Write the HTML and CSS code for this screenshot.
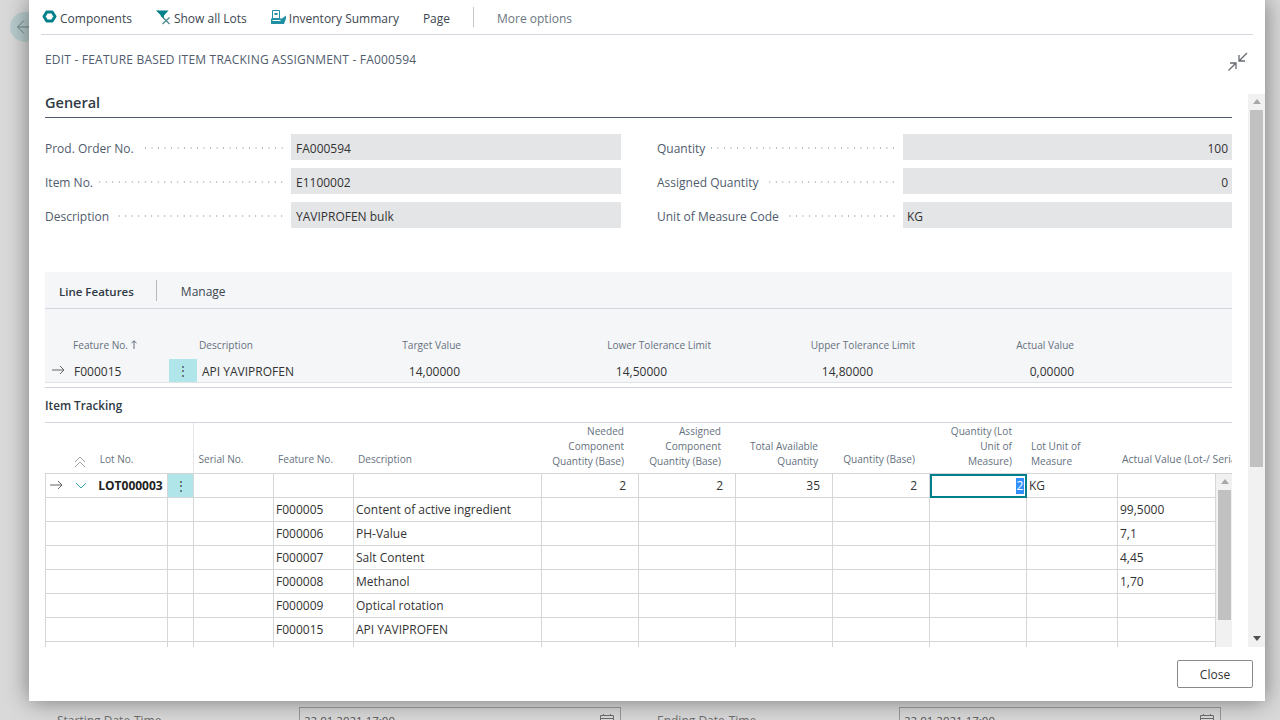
FILE: index.html
```html
<!DOCTYPE html>
<html lang="en">
<head>
    <meta charset="UTF-8">
    <title>Edit - Feature Based Item Tracking Assignment</title>
    <link rel="stylesheet" href="styles.css">
</head>
<body>
    <!-- Page behind the dialog -->
    <div class="page">
        <div class="back-button">
            <svg width="16" height="16" viewBox="0 0 16 16"><path d="M8 1.500 1.500 8 8 14.500M1.500 8H15" fill="none" stroke="#6f8486" stroke-width="1"/></svg>
        </div>
        <div class="date-row">
            <div class="date-field">
                <span class="date-label">Starting Date-Time</span>
                <span class="date-dots"></span>
                <div class="date-input">
                    <span>22.01.2021 17:00</span>
                    <svg width="16" height="14" viewBox="0 0 16 14"><path d="M1.500 2.500h13v11h-13zM1.500 5.500h13M4.500 1v2M11.500 1v2" fill="none" stroke="#6f6f6f"/></svg>
                </div>
            </div>
            <div class="date-field">
                <span class="date-label">Ending Date-Time</span>
                <span class="date-dots"></span>
                <div class="date-input">
                    <span>22.01.2021 17:00</span>
                    <svg width="16" height="14" viewBox="0 0 16 14"><path d="M1.500 2.500h13v11h-13zM1.500 5.500h13M4.500 1v2M11.500 1v2" fill="none" stroke="#6f6f6f"/></svg>
                </div>
            </div>
        </div>
    </div>

    <div class="dialog">
        <div class="action-bar">
            <a class="action">
                <svg width="15" height="16" viewBox="0 0 15 16"><path d="M2 7.500 4.800 3h5.400L13 7.500 10.200 12H4.800z" fill="none" stroke="#00808a" stroke-width="3" stroke-linejoin="round"/></svg>
                Components
            </a>
            <a class="action">
                <svg width="15" height="16" viewBox="0 0 15 16"><path d="M0 1.500h12.500L8 6.500v3.500L5 7.500 4.500 6z" fill="#00808a"/><path d="M6.500 8 13.500 15M13.500 8.500 6.500 15" stroke="#4d8a90" stroke-width="1.300"/></svg>
                Show all Lots
            </a>
            <a class="action">
                <svg width="15" height="16" viewBox="0 0 15 16"><path d="M1.500 1.500h7v8h-7z" fill="#fff" stroke="#1f8fa3"/><path d="M3.500 4h3v2h-3z" fill="#1f8fa3"/><path d="M0 9.500h11l4-3v3l-2 5.500H0z" fill="#1f8fa3"/><path d="M1.500 11.500h8" stroke="#fff"/></svg>
                Inventory Summary
            </a>
            <a class="action">Page</a>
            <span class="action-sep"></span>
            <a class="action muted">More options</a>
        </div>

        <div class="title-row">
            <div class="dialog-title">EDIT - FEATURE BASED ITEM TRACKING ASSIGNMENT - FA000594</div>
            <svg width="20" height="20" viewBox="0 0 20 20"><path d="M19 1 11 9M11 3v6h6M.5 18.500 8 11M2 11h6v6" fill="none" stroke="#666a70" stroke-width="1.300"/></svg>
        </div>

        <div class="dialog-main">
            <div class="content">
                <h2 class="section-title">General</h2>
                <div class="form">
                    <div class="form-col">
                        <div class="form-row"><span class="form-label">Prod. Order No.</span><span class="dots"></span><div class="form-value">FA000594</div></div>
                        <div class="form-row"><span class="form-label">Item No.</span><span class="dots"></span><div class="form-value">E1100002</div></div>
                        <div class="form-row"><span class="form-label">Description</span><span class="dots"></span><div class="form-value">YAVIPROFEN bulk</div></div>
                    </div>
                    <div class="form-col">
                        <div class="form-row"><span class="form-label">Quantity</span><span class="dots"></span><div class="form-value num">100</div></div>
                        <div class="form-row"><span class="form-label">Assigned Quantity</span><span class="dots"></span><div class="form-value num">0</div></div>
                        <div class="form-row"><span class="form-label">Unit of Measure Code</span><span class="dots"></span><div class="form-value">KG</div></div>
                    </div>
                </div>

                <div class="subpage">
                    <div class="subpage-bar">
                        <span class="subpage-name">Line Features</span>
                        <span class="subpage-sep"></span>
                        <span class="subpage-link">Manage</span>
                    </div>
                    <div class="feature-head">
                        <span class="fh-no">Feature No. <svg width="6" height="9" viewBox="0 0 6 9"><path d="M3 9V1M.5 3 3 .8 5.500 3" fill="none" stroke="#5f6b78"/></svg></span>
                        <span class="fh-desc">Description</span>
                        <span class="fh-num w-target">Target Value</span>
                        <span class="fh-num w-lower">Lower Tolerance Limit</span>
                        <span class="fh-num w-upper">Upper Tolerance Limit</span>
                        <span class="fh-num w-actual">Actual Value</span>
                    </div>
                    <div class="feature-row">
                        <svg class="row-arrow" width="14" height="10" viewBox="0 0 14 10"><path d="M1 5h12M9 1l4 4-4 4" fill="none" stroke="#666"/></svg>
                        <span class="fr-no">F000015</span>
                        <span class="kebab">&#8942;</span>
                        <span class="fr-desc">API YAVIPROFEN</span>
                        <span class="fr-num v-target">14,00000</span>
                        <span class="fr-num v-lower">14,50000</span>
                        <span class="fr-num v-upper">14,80000</span>
                        <span class="fr-num v-actual">0,00000</span>
                    </div>
                </div>

                <div class="tracking">
                    <div class="tracking-title">Item Tracking</div>
                    <div class="tracking-head">
                        <table class="grid head">
                            <colgroup><col class="c1"><col class="c2"><col class="c3"><col class="c4"><col class="c5"><col class="c6"><col class="c6"><col class="c6"><col class="c6"><col class="c6"><col class="c7"><col class="c8"></colgroup>
                            <tr>
                                <th colspan="2" class="lot-head single">
                                    <svg width="12" height="12" viewBox="0 0 12 12"><path d="M1 6l5-5 5 5M1 11l5-5 5 5" fill="none" stroke="#9aa0a6"/></svg>
                                    <span>Lot No.</span>
                                </th>
                                <th class="single">Serial No.</th>
                                <th class="single">Feature No.</th>
                                <th class="single">Description</th>
                                <th class="num">Needed Component Quantity (Base)</th>
                                <th class="num">Assigned Component Quantity (Base)</th>
                                <th class="num">Total Available Quantity</th>
                                <th class="num single">Quantity (Base)</th>
                                <th class="num">Quantity (Lot Unit of Measure)</th>
                                <th>Lot Unit of Measure</th>
                                <th class="nowrap single">Actual Value (Lot-/ Serial No.)</th>
                            </tr>
                        </table>
                    </div>
                    <div class="tracking-body">
                        <table class="grid body">
                            <colgroup><col class="c1"><col class="c2"><col class="c3"><col class="c4"><col class="c5"><col class="c6"><col class="c6"><col class="c6"><col class="c6"><col class="c6"><col class="c7"><col class="c9"></colgroup>
                            <tr class="lot-row">
                                <td class="lot-cell">
                                    <svg class="row-arrow" width="14" height="10" viewBox="0 0 14 10"><path d="M1 5h12M9 1l4 4-4 4" fill="none" stroke="#666"/></svg>
                                    <svg class="lot-toggle" width="12" height="7" viewBox="0 0 12 7"><path d="M1 1l5 5 5-5" fill="none" stroke="#3aa5ad"/></svg>
                                    <b>LOT000003</b>
                                </td>
                                <td class="kebab">&#8942;</td>
                                <td></td><td></td><td></td>
                                <td class="num">2</td><td class="num">2</td><td class="num">35</td><td class="num">2</td>
                                <td class="focus"><span class="selected">2</span></td>
                                <td>KG</td><td></td>
                            </tr>
                            <tr><td></td><td></td><td></td><td>F000005</td><td>Content of active ingredient</td><td></td><td></td><td></td><td></td><td></td><td></td><td>99,5000</td></tr>
                            <tr><td></td><td></td><td></td><td>F000006</td><td>PH-Value</td><td></td><td></td><td></td><td></td><td></td><td></td><td>7,1</td></tr>
                            <tr><td></td><td></td><td></td><td>F000007</td><td>Salt Content</td><td></td><td></td><td></td><td></td><td></td><td></td><td>4,45</td></tr>
                            <tr><td></td><td></td><td></td><td>F000008</td><td>Methanol</td><td></td><td></td><td></td><td></td><td></td><td></td><td>1,70</td></tr>
                            <tr><td></td><td></td><td></td><td>F000009</td><td>Optical rotation</td><td></td><td></td><td></td><td></td><td></td><td></td><td></td></tr>
                            <tr><td></td><td></td><td></td><td>F000015</td><td>API YAVIPROFEN</td><td></td><td></td><td></td><td></td><td></td><td></td><td></td></tr>
                            <tr><td></td><td></td><td></td><td></td><td></td><td></td><td></td><td></td><td></td><td></td><td></td><td></td></tr>
                        </table>
                        <div class="scrollbar inner"><span class="arrow-up"></span><span class="thumb"></span></div>
                    </div>
                </div>
            </div>
            <div class="scrollbar outer"><span class="arrow-up"></span><span class="thumb"></span><span class="spacer"></span><span class="arrow-down"></span></div>
        </div>

        <div class="dialog-footer">
            <button class="close-button">Close</button>
        </div>
    </div>
</body>
</html>
```

FILE: styles.css
```css
/* Page behind the dialog */
html, body {
    margin: 0;
    padding: 0;
    height: 720px;
    overflow: hidden;
}

body {
    font-family: "Open Sans", "Noto Sans", sans-serif;
    font-size: 12px;
    color: #2f2f2f;
    background-color: #d9d9d9;
}

.page {
    height: 720px;
    padding: 12px 0 0 10px;
    box-sizing: border-box;
    overflow: hidden;
}

.back-button {
    width: 30px;
    height: 30px;
    border-radius: 50%;
    background-color: #b9cdce;
    display: flex;
    align-items: center;
    justify-content: center;
    box-sizing: border-box;
    padding-right: 2px;
}

.date-row {
    display: flex;
    gap: 36px;
    margin-top: 665px;
    margin-left: 47px;
}

.date-field {
    width: 564px;
    display: flex;
    align-items: center;
    color: #6e6e6e;
    font-size: 12px;
}

.date-dots {
    flex: 1;
    height: 2px;
    margin: 2px 6px 0;
    background-image: radial-gradient(circle, #a4a4a4 0.6px, transparent 0.9px);
    background-size: 6.500px 2px;
}

.date-input {
    width: 322px;
    height: 26px;
    box-sizing: border-box;
    flex: none;
    border: 1px solid #9a9a9a;
    padding: 0 5px 0 4px;
    display: flex;
    align-items: center;
    justify-content: space-between;
    color: #555;
    font-size: 11.500px;
}

/* Dialog */
.dialog {
    position: absolute;
    left: 29px;
    top: 0;
    width: 1236px;
    height: 701px;
    background-color: #fff;
    box-shadow: 0 0 22px rgba(0, 0, 0, 0.45);
    display: flex;
    flex-direction: column;
}

.action-bar {
    height: 34px;
    margin: 0 12px;
    border-bottom: 1px solid #d4d5de;
    display: flex;
    align-items: center;
    padding-left: 1px;
    flex: none;
}

.action {
    display: flex;
    align-items: center;
    gap: 3px;
    margin-right: 24px;
    font-size: 12px;
    line-height: 20px;
    padding-top: 4px;
    color: #3c4650;
    white-space: nowrap;
}

.action svg {
    margin-top: -5px;
}

.action.muted {
    color: #6b7580;
}

.action-sep {
    width: 1px;
    height: 20px;
    background-color: #c4c6cc;
    margin: 0 23px 0 -1px;
}

.title-row {
    height: 59px;
    flex: none;
    box-sizing: border-box;
    padding: 17px 17px 0 16px;
    display: flex;
    justify-content: space-between;
    align-items: flex-start;
}

.dialog-title {
    font-size: 12px;
    letter-spacing: 0.2px;
    color: #505c6d;
    line-height: 16px;
}

.dialog-main {
    display: flex;
    height: 553px;
    flex: none;
    padding-left: 16px;
    overflow: hidden;
}

.content {
    width: 1187px;
    flex: none;
}

.section-title {
    margin: 0;
    height: 23px;
    line-height: 18px;
    font-size: 14.500px;
    font-weight: 600;
    color: #2f3a45;
    border-bottom: 1px solid #505c6d;
}

/* General form */
.form {
    display: flex;
    gap: 36px;
    margin-top: 16px;
    height: 138px;
}

.form-col {
    display: flex;
    flex-direction: column;
    gap: 8px;
    flex: none;
}

.form-col:first-child {
    width: 576px;
}

.form-col:last-child {
    width: 575px;
}

.form-row {
    display: flex;
    align-items: center;
    height: 26px;
}

.form-label {
    color: #505c6d;
    font-size: 12px;
    white-space: nowrap;
    padding-top: 2px;
}

.dots {
    flex: 1;
    height: 2px;
    margin: 2px 6px 0;
    background-image: radial-gradient(circle, #b4b8bd 0.6px, transparent 0.9px);
    background-size: 6.500px 2px;
    background-position: right center;
}

.form-value {
    width: 330px;
    height: 26px;
    line-height: 29px;
    box-sizing: border-box;
    flex: none;
    background-color: #e4e5e7;
    padding: 0 5px;
    color: #333;
    font-size: 12px;
}

.form-value.num {
    text-align: right;
    padding-right: 4px;
}

.form-col:last-child .form-value {
    width: 329px;
    padding-left: 4px;
}

/* Line Features part */
.subpage {
    background-color: #f5f6f8;
    height: 110px;
    border-bottom: 1px solid #e2e3e6;
}

.subpage-bar {
    height: 36px;
    box-sizing: content-box;
    border-bottom: 1px solid #d4d5de;
    display: flex;
    align-items: center;
    padding-left: 14px;
    font-size: 12px;
}

.subpage-name,
.subpage-link {
    padding-top: 2px;
}

.subpage-name {
    color: #2f3a45;
    font-weight: 600;
    font-size: 11.500px;
}

.subpage-sep {
    width: 1px;
    height: 21px;
    background-color: #b5b8bd;
    margin: 0 24px 0 22px;
}

.subpage-link {
    color: #3c4650;
}

.feature-head {
    position: relative;
    height: 50px;
    font-size: 10.100px;
    color: #66717e;
}

.feature-head span,
.feature-row span {
    position: absolute;
    white-space: nowrap;
}

.feature-head span {
    top: 29px;
}

.fh-no { left: 28px; }
.fh-desc { left: 154px; }
.fh-num { text-align: right; }
.w-target { right: 771px; }
.w-lower { right: 521px; }
.w-upper { right: 317px; }
.w-actual { right: 158px; }

.feature-row {
    position: relative;
    height: 23px;
    color: #333;
}

.feature-row .row-arrow {
    position: absolute;
    left: 6px;
    top: 6px;
}

.feature-row span {
    top: 4px;
}

.fr-no { left: 29px; }
.fr-desc { left: 157px; }
.v-target { right: 772px; }
.v-lower { right: 565px; }
.v-upper { right: 359px; }
.v-actual { right: 158px; }

.feature-row .kebab {
    top: 0;
    left: 124px;
    width: 28px;
    height: 23px;
    line-height: 23px;
    text-align: center;
}

.kebab {
    background-color: #b0e6ea;
    color: #444;
    text-align: center;
}

/* Item Tracking part */
.tracking {
    margin-top: 4px;
    border-top: 1px solid #d4d5de;
}

.tracking-title {
    height: 34px;
    line-height: 35px;
    font-size: 11.700px;
    font-weight: 600;
    color: #2f3a45;
    border-bottom: 1px solid #d4d5de;
}

.grid {
    border-collapse: collapse;
    table-layout: fixed;
    font-size: 12px;
}

.c1 { width: 122px; }
.c2 { width: 26px; }
.c3 { width: 80px; }
.c4 { width: 80px; }
.c5 { width: 188px; }
.c6 { width: 97px; }
.c7 { width: 91px; }
.c8 { width: 115px; }
.c9 { width: 98px; }

.grid.head { width: 1187px; }
.grid.body { width: 1170px; flex: none; }

.tracking-head {
    overflow: hidden;
    height: 51px;
    border-bottom: 1px solid #d5d6d8;
    box-sizing: border-box;
}

.grid th {
    box-sizing: border-box;
    height: 50px;
    vertical-align: bottom;
    text-align: left;
    font-weight: 400;
    font-size: 10.100px;
    line-height: 15px;
    color: #66717e;
    padding: 0 5px 4px;
    overflow: hidden;
}

.grid th.single {
    padding-bottom: 6px;
}

.grid th.num {
    text-align: right;
    padding-right: 14px;
}

.grid th.nowrap {
    white-space: nowrap;
    font-size: 10.400px;
}

.grid th.lot-head {
    border-right: 1px solid #e6e7e9;
    padding-left: 29px;
    padding-bottom: 1px;
}

.lot-head span {
    margin-left: 11px;
    position: relative;
    top: -5px;
}

.tracking-body {
    display: flex;
    height: 173px;
    overflow: hidden;
}

.grid td {
    height: 23px;
    padding: 0 2px;
    border: 1px solid #d5d6d8;
    border-top: none;
    white-space: nowrap;
    overflow: hidden;
    color: #333;
}

.grid td.num {
    text-align: right;
    padding-right: 12px;
}

.grid td.lot-cell {
    padding-left: 3px;
}

.lot-cell b {
    font-weight: 700;
    color: #222;
    margin-left: 8px;
}

.lot-toggle {
    margin-left: 9px;
    vertical-align: 1px;
}

.grid td.kebab {
    background-color: #b0e6ea;
    color: #444;
}

.grid td.focus {
    text-align: right;
    padding: 0;
    outline: 2px solid #00808a;
    outline-offset: -2px;
}

.selected {
    display: inline-block;
    background-color: #3390ff;
    color: #fff;
    width: 8px;
    line-height: 16px;
    margin-right: 2px;
    text-align: center;
}

/* Scrollbars */
.scrollbar {
    display: flex;
    flex-direction: column;
    align-items: center;
    background-color: #f1f1f1;
    width: 17px;
    flex: none;
}

.scrollbar .thumb {
    width: 13px;
    background-color: #c1c1c1;
}

.scrollbar.inner .thumb {
    height: 130px;
    margin-top: 6px;
}

.scrollbar.outer {
    height: 553px;
    margin-left: 16px;
}

.scrollbar.outer .thumb {
    height: 357px;
    margin-top: 6px;
}

.arrow-up {
    width: 0;
    height: 0;
    margin-top: 5px;
    border-left: 4px solid transparent;
    border-right: 4px solid transparent;
    border-bottom: 5px solid #a8a8a8;
}

.arrow-down {
    width: 0;
    height: 0;
    margin-bottom: 6px;
    border-left: 4px solid transparent;
    border-right: 4px solid transparent;
    border-top: 5px solid #505050;
}

.spacer {
    flex: 1;
}

/* Footer */
.dialog-footer {
    flex: 1;
    display: flex;
    justify-content: flex-end;
    padding: 13px 12px 0 0;
}

.close-button {
    width: 76px;
    height: 28px;
    background-color: #fff;
    border: 1px solid #8a8a8a;
    border-radius: 2px;
    font-family: inherit;
    font-size: 12px;
    color: #333;
}
```
